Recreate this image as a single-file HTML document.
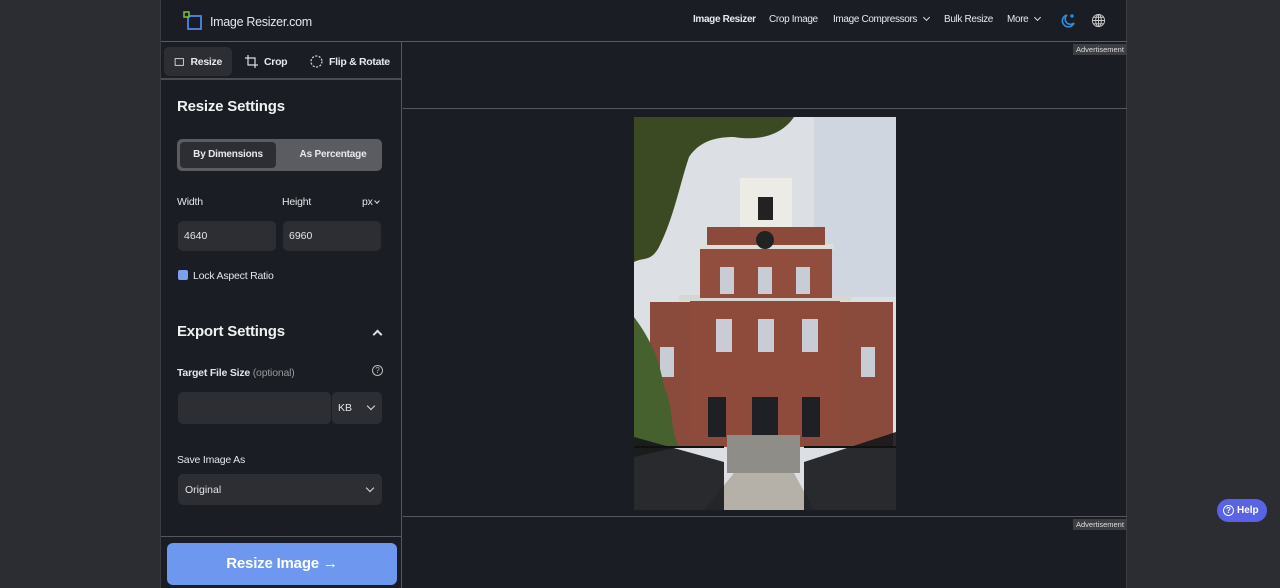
<!DOCTYPE html>
<html><head><meta charset="utf-8">
<style>
*{box-sizing:border-box;margin:0;padding:0}
body{width:1280px;height:588px;overflow:hidden;background:#2c2d32;font-family:"Liberation Sans",sans-serif;color:#e8e9ec;position:relative}
.app{position:absolute;left:160px;top:0;width:967px;height:588px;background:#1b1d24;border-left:1px solid #3a3c42;border-right:1px solid #3a3c42}
.hdr{position:absolute;left:0;top:0;width:966px;height:42px;border-bottom:1px solid #5a5c62}
.logo{position:absolute;left:22px;top:11px}
.logotxt{position:absolute;left:49px;top:15px;font-size:12.5px;color:#e6e7ea;letter-spacing:-0.3px}
.nav{position:absolute;top:14px;font-size:10px;font-weight:bold;color:#e8e9ec;white-space:nowrap;letter-spacing:-0.35px}
.side{position:absolute;left:0;top:42px;width:241px;height:546px;border-right:1px solid #55575c}
.tabs{height:38px;border-bottom:2px solid #4a4c52;position:relative}
.tab{position:absolute;top:5px;height:29px;font-size:10.5px;font-weight:bold;display:flex;align-items:center;gap:6px;padding:0 10px;border-radius:5px;white-space:nowrap;letter-spacing:-0.3px}
.h{position:absolute;left:16px;font-size:15px;font-weight:bold;color:#f0f1f3;letter-spacing:-0.2px}
.lbl{position:absolute;font-size:10.5px;font-weight:bold;color:#e4e5e8;white-space:nowrap;letter-spacing:-0.2px}
.inp{position:absolute;background:#2c2e34;border-radius:5px;font-size:10.5px;padding-left:6px;display:flex;align-items:center;color:#e4e5e8}
.chev{display:inline-block;width:6px;height:6px;border-right:1.5px solid #ddd;border-bottom:1.5px solid #ddd;transform:rotate(45deg)}
.ad{position:absolute;font-size:7.5px;background:#3c3e44;color:#ddd;padding:1px 3px}
</style></head><body>
<div class="app">
 <div class="hdr">
  <svg class="logo" width="20" height="20" viewBox="0 0 20 20"><rect x="5" y="5" width="13" height="13" fill="none" stroke="#4d86e6" stroke-width="1.8"/><rect x="1" y="1" width="5" height="5" fill="#1b1d24" stroke="#7dc243" stroke-width="1.5"/></svg>
  <div class="logotxt">Image Resizer.com</div>
  <div class="nav" style="left:532px">Image Resizer</div>
  <div class="nav" style="left:608px;font-weight:normal">Crop Image</div>
  <div class="nav" style="left:672px;font-weight:normal">Image Compressors <span class="chev" style="width:5px;height:5px;margin-left:4px;position:relative;top:-2px"></span></div>
  <div class="nav" style="left:783px;font-weight:normal">Bulk Resize</div>
  <div class="nav" style="left:846px;font-weight:normal">More <span class="chev" style="width:5px;height:5px;margin-left:4px;position:relative;top:-2px"></span></div>
  <svg style="position:absolute;left:899px;top:13px" width="16" height="16" viewBox="0 0 16 16"><path d="M7 2a6 6 0 1 0 7 8a5 5 0 0 1-7-8z" fill="none" stroke="#2a8fe0" stroke-width="1.6"/><path d="M12 1v4M10 3h4" stroke="#2a8fe0" stroke-width="1.4"/></svg>
  <svg style="position:absolute;left:930px;top:13px" width="15" height="15" viewBox="0 0 16 16" fill="none" stroke="#ccc" stroke-width="1"><circle cx="8" cy="8" r="6.5"/><ellipse cx="8" cy="8" rx="3" ry="6.5"/><path d="M1.5 8h13M2.5 4.5h11M2.5 11.5h11M8 1.5v13"/></svg>
 </div>
 <div class="side">
  <div class="tabs">
   <div class="tab" style="left:3px;background:#2c2e34;width:68px"><svg width="14" height="12" viewBox="0 0 14 12" fill="none" stroke="#ddd" stroke-width="1.2"><rect x="1.5" y="1.5" width="11" height="9"/></svg>Resize</div>
   <div class="tab" style="left:74px"><svg width="13" height="13" viewBox="0 0 13 13" fill="none" stroke="#ddd" stroke-width="1.2"><path d="M3 0v10h10M0 3h10v10"/></svg>Crop</div>
   <div class="tab" style="left:139px"><svg width="13" height="13" viewBox="0 0 13 13" fill="none" stroke="#ddd" stroke-width="1.2" stroke-dasharray="2 1.5"><circle cx="6.5" cy="6.5" r="5.5"/></svg>Flip &amp; Rotate</div>
  </div>
  <div class="h" style="top:56px">Resize Settings</div>
  <div style="position:absolute;left:16px;top:97px;width:205px;height:32px;background:#5a5c62;border-radius:5px">
   <div style="position:absolute;left:3px;top:3px;width:96px;height:26px;background:#2c2e34;border-radius:4px;font-size:10px;font-weight:bold;text-align:center;line-height:26px;letter-spacing:-0.2px">By Dimensions</div>
   <div style="position:absolute;left:110px;top:3px;width:92px;height:26px;font-size:10px;font-weight:bold;text-align:center;line-height:26px;letter-spacing:-0.2px">As Percentage</div>
  </div>
  <div class="lbl" style="left:16px;top:154px;font-weight:normal">Width</div>
  <div class="lbl" style="left:121px;top:154px;font-weight:normal">Height</div>
  <div class="lbl" style="left:201px;top:154px;font-weight:normal">px <span class="chev" style="width:4px;height:4px;position:relative;top:-2px"></span></div>
  <div class="inp" style="left:17px;top:179px;width:98px;height:30px">4640</div>
  <div class="inp" style="left:122px;top:179px;width:98px;height:30px">6960</div>
  <div style="position:absolute;left:17px;top:228px;width:10px;height:10px;background:#7e9ff0;border-radius:2px"></div>
  <div class="lbl" style="left:32px;top:228px;font-weight:normal">Lock Aspect Ratio</div>
  <div class="h" style="top:281px">Export Settings</div>
  <div class="chev" style="position:absolute;left:213px;top:289px;transform:rotate(-135deg);border-width:2px;width:7px;height:7px"></div>
  <div class="lbl" style="left:16px;top:325px">Target File Size <span style="font-weight:normal;color:#999">(optional)</span></div>
  <div style="position:absolute;left:211px;top:323px;width:11px;height:11px;border:1px solid #bbb;border-radius:50%;font-size:8px;text-align:center;line-height:9px;color:#bbb">?</div>
  <div class="inp" style="left:17px;top:350px;width:153px;height:32px"></div>
  <div class="inp" style="left:171px;top:350px;width:50px;height:32px">KB <span class="chev" style="margin-left:16px;position:relative;top:-2px"></span></div>
  <div class="lbl" style="left:16px;top:412px;font-weight:normal">Save Image As</div>
  <div class="inp" style="left:17px;top:432px;width:204px;height:31px;padding-left:7px">Original<span class="chev" style="position:absolute;right:9px;top:11px"></span></div>
  <div style="position:absolute;left:0;top:494px;width:241px;border-top:1px solid #55575c"></div>
  <div style="position:absolute;left:6px;top:501px;width:230px;height:42px;background:#6e97f0;border-radius:6px;font-size:15px;font-weight:bold;color:#fff;text-align:center;line-height:42px;letter-spacing:-0.2px">Resize Image →</div>
 </div>
 <div style="position:absolute;left:242px;top:108px;width:724px;border-top:1px solid #55575c"></div>
 <div style="position:absolute;left:242px;top:516px;width:724px;border-top:1px solid #55575c"></div>
 <div class="ad" style="left:912px;top:44px">Advertisement</div>
 <div class="ad" style="left:912px;top:519px">Advertisement</div>
</div>
<svg style="position:absolute;left:634px;top:117px" width="262" height="393" viewBox="0 0 262 393">
 <rect width="262" height="393" fill="#dcdfe4"/>
 <rect x="180" width="82" height="180" fill="#cfd6e0"/>
 <rect x="16" y="185" width="243" height="145" fill="#8a4a3c"/>
 <rect x="56" y="181" width="150" height="140" fill="#8e4b3c"/>
 <rect x="45" y="178" width="172" height="6" fill="#d8d6d0"/>
 <rect x="66" y="131" width="132" height="50" fill="#914d3e"/>
 <rect x="64" y="127" width="136" height="5" fill="#e0ded8"/>
 <rect x="73" y="110" width="118" height="18" fill="#8c4a3c"/>
 <rect x="106" y="61" width="52" height="49" fill="#ecebe6"/>
 <rect x="124" y="80" width="15" height="23" fill="#222"/>
 <circle cx="131" cy="123" r="9" fill="#222"/>
 <g fill="#c8ccd4"><rect x="86" y="150" width="14" height="27"/><rect x="124" y="150" width="14" height="27"/><rect x="162" y="150" width="14" height="27"/><rect x="82" y="202" width="16" height="33"/><rect x="124" y="202" width="16" height="33"/><rect x="168" y="202" width="16" height="33"/><rect x="26" y="230" width="14" height="30"/><rect x="227" y="230" width="14" height="30"/></g>
 <g fill="#1e2026"><rect x="74" y="280" width="18" height="40"/><rect x="118" y="280" width="26" height="40"/><rect x="168" y="280" width="18" height="40"/></g>
 <rect x="93" y="318" width="73" height="38" fill="#8f8d88"/>
 <path d="M100 356h60l20 37H70z" fill="#b5b1a8"/>
 <path d="M0 0h160c-10 15-30 25-60 20c-20 0-35 5-45 20c-10 30-15 60-30 90c-8 15-15 10-25 15z" fill="#3b4a22"/>
 <path d="M0 200c15 20 25 40 30 70c10 20 5 40 15 60L0 340z" fill="#46612e"/>
 <path d="M0 320l90 25v48H0zM170 345l92-30v78H170z" fill="#14161a" opacity=".9"/>
 <g stroke="#111" stroke-width="2"><path d="M0 330h90M170 330h92"/></g>
</svg>
<div style="position:absolute;left:1217px;top:499px;width:50px;height:23px;background:#5864e4;border-radius:12px;font-size:10px;font-weight:bold;color:#fff;line-height:23px;padding-left:6px"><span style="display:inline-block;width:11px;height:11px;border:1px solid #fff;border-radius:50%;font-size:8px;text-align:center;line-height:9px;margin-right:3px">?</span>Help</div>
</body></html>
